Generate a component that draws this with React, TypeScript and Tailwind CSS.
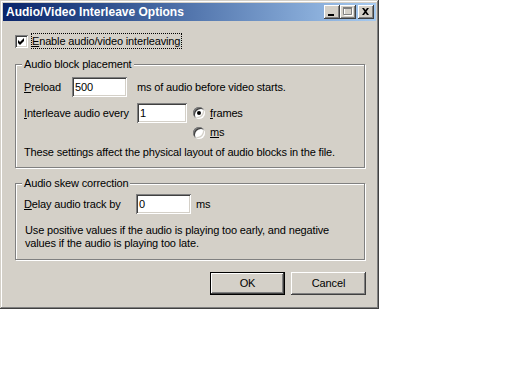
import React from "react";

const raised =
  "shadow-[inset_-1px_-1px_#404040,inset_1px_1px_#fff,inset_-2px_-2px_#808080,inset_2px_2px_#d4d0c8]";
const sunken =
  "shadow-[inset_1px_1px_#808080,inset_-1px_-1px_#fff,inset_2px_2px_#404040,inset_-2px_-2px_#d4d0c8]";

function TitleBtn({ children, className = "" }: { children: React.ReactNode; className?: string }) {
  return (
    <div className={`w-[16px] h-[14px] bg-[#d4d0c8] flex items-center justify-center ${raised} ${className}`}>
      {children}
    </div>
  );
}

function Field({ value, w }: { value: string; w: string }) {
  return (
    <div className={`${w} h-[20px] bg-white flex items-center pl-[3px] ${sunken}`}>{value}</div>
  );
}

function Radio({ on }: { on?: boolean }) {
  return (
    <div className={`w-[12px] h-[12px] rounded-full bg-white flex items-center justify-center ${sunken}`}>
      {on && <div className="w-[4px] h-[4px] rounded-full bg-black" />}
    </div>
  );
}

function Group({ title, h, children }: { title: string; h: string; children: React.ReactNode }) {
  return (
    <div
      className={`relative w-[350px] ${h} border border-[#808080] shadow-[inset_1px_1px_#fff,1px_1px_#fff]`}
    >
      <span className="absolute left-[6px] top-[-7px] px-[2px] bg-[#d4d0c8] leading-[13px]">{title}</span>
      {children}
    </div>
  );
}

export default function App() {
  return (
    <div className="w-[512px] h-[384px] bg-white font-['Liberation_Sans',Arial,sans-serif] text-[11px] leading-[13px] tracking-[-0.15px] text-black">
      <div className="w-[379px] h-[309px] bg-[#d4d0c8] p-[3px] flex flex-col shadow-[inset_-1px_-1px_#404040,inset_1px_1px_#d4d0c8,inset_-2px_-2px_#808080,inset_2px_2px_#fff]">
        {/* Title bar */}
        <div className="h-[18px] flex items-center pl-[2px] pr-[2px] bg-gradient-to-r from-[#0a246a] to-[#a6caf0]">
          <span className="flex-1 font-bold text-white text-[12px] tracking-normal pl-[1px]">
            Audio/Video Interleave Options
          </span>
          <div className="flex items-center">
            <TitleBtn>
              <svg width="16" height="14" viewBox="0 0 16 14">
                <rect x="4" y="9" width="6" height="2" fill="#000" />
              </svg>
            </TitleBtn>
            <TitleBtn>
              <svg width="16" height="14" viewBox="0 0 16 14">
                <path d="M4.5 3.5h8v7h-8z" fill="none" stroke="#fff" />
                <rect x="4" y="3" width="8" height="1" fill="#fff" />
                <path d="M3.5 2.5h8v7h-8z" fill="none" stroke="#808080" />
                <rect x="3" y="2" width="9" height="2" fill="#808080" />
              </svg>
            </TitleBtn>
            <TitleBtn className="ml-[2px]">
              <svg width="16" height="14" viewBox="0 0 16 14">
                <path d="M4 3h2l1.5 2 1.5-2h2l-2.5 3.5 2.5 3.5h-2l-1.5-2-1.5 2h-2l2.5-3.5z" fill="#000" />
              </svg>
            </TitleBtn>
          </div>
        </div>

        {/* Body */}
        <div className="ml-[12px] w-[351px] flex flex-col">
          {/* Checkbox */}
          <div className="mt-[12px] h-[16px] flex items-center">
            <div className={`w-[13px] h-[13px] bg-white ${sunken}`}>
              <svg width="13" height="13" viewBox="0 0 13 13">
                <path d="M3 5l2 2 4-4v3l-4 4-2-2z" fill="#000" />
              </svg>
            </div>
            <div className="ml-[3px] h-[16px] border border-dotted border-black flex items-center pr-[1px]">
              <span>
                <span className="underline">E</span>nable audio/video interleaving
              </span>
            </div>
          </div>

          {/* Group 1 */}
          <div className="mt-[15px]">
            <Group title="Audio block placement" h="h-[104px]">
              <div className="pt-[12px] pl-[8px] flex flex-col">
                <div className="h-[20px] flex items-center">
                  <span className="w-[48px]">
                    <span className="underline">P</span>reload
                  </span>
                  <Field value="500" w="w-[55px]" />
                  <span className="ml-[10px]">ms of audio before video starts.</span>
                </div>
                <div className="mt-[6px] flex items-start">
                  <span className="w-[113px] h-[20px] flex items-center">
                    <span>
                      <span className="underline">I</span>nterleave audio every
                    </span>
                  </span>
                  <Field value="1" w="w-[50px]" />
                  <div className="ml-[6px] flex flex-col">
                    <div className="h-[20px] flex items-center">
                      <Radio on />
                      <span className="ml-[5px]">
                        <span className="underline">f</span>rames
                      </span>
                    </div>
                    <div className="h-[19px] flex items-center">
                      <Radio />
                      <span className="ml-[5px]">
                        <span className="underline">m</span>s
                      </span>
                    </div>
                  </div>
                </div>
                <div className="mt-[4px]">These settings affect the physical layout of audio blocks in the file.</div>
              </div>
            </Group>
          </div>

          {/* Group 2 */}
          <div className="mt-[15px]">
            <Group title="Audio skew correction" h="h-[77px]">
              <div className="pt-[10px] pl-[8px] flex flex-col">
                <div className="h-[20px] flex items-center">
                  <span className="w-[112px]">
                    <span className="underline">D</span>elay audio track by
                  </span>
                  <Field value="0" w="w-[55px]" />
                  <span className="ml-[5px]">ms</span>
                </div>
                <div className="mt-[10px] pl-[1px]">
                  Use positive values if the audio is playing too early, and negative
                  <br />
                  values if the audio is playing too late.
                </div>
              </div>
            </Group>
          </div>

          {/* Buttons */}
          <div className="mt-[12px] flex justify-end gap-[6px]">
            <div className="w-[75px] h-[23px] border border-black">
              <div className={`w-full h-full flex items-center justify-center ${raised}`}>OK</div>
            </div>
            <div className={`w-[75px] h-[23px] flex items-center justify-center ${raised}`}>Cancel</div>
          </div>
        </div>
      </div>
    </div>
  );
}
